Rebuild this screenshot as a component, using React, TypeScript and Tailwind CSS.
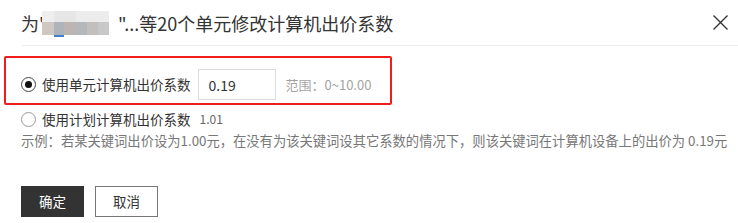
import React, { useState } from 'react';

const font = { fontFamily: '"Noto Sans CJK SC", "Noto Sans", sans-serif' };

const Radio: React.FC<{ checked: boolean }> = ({ checked }) => (
  <span
    className={`w-[15px] h-[15px] rounded-full border flex items-center justify-center shrink-0 bg-white ${
      checked ? 'border-[#444]' : 'border-[#999]'
    }`}
  >
    {checked && <span className="w-[7px] h-[7px] rounded-full bg-[#111]" />}
  </span>
);

export default function App() {
  const [mode, setMode] = useState<'unit' | 'plan'>('unit');
  const [value, setValue] = useState('0.19');

  return (
    <div className="w-[738px] h-[223px] bg-white overflow-hidden text-[#333]" style={font}>
      {/* Header */}
      <div className="h-[45px] flex items-center justify-between pl-[21px] pr-[6px]">
        <h2 className="flex items-center text-[18px] leading-none text-[#333]">
          <span>为'</span>
          {/* masked name */}
          <span className="flex flex-col w-[67px] h-[24px] -ml-[2px] relative">
            <span className="flex h-[11px]">
              <span className="w-[12px] bg-[#eeeeee]" />
              <span className="w-[22px] bg-[#e6e6e6]" />
              <span className="w-[33px] bg-[#ececec]" />
            </span>
            <span className="flex h-[13px]">
              <span className="w-[12px] bg-[#cfc8c2]" />
              <span className="w-[10px] bg-[#aeb4bb]" />
              <span className="w-[12px] bg-[#bdb5b1]" />
              <span className="w-[11px] bg-[#b5b8bb]" />
              <span className="w-[11px] bg-[#c3bfbc]" />
              <span className="w-[11px] bg-[#c8c8c8]" />
            </span>
            <span className="absolute left-[12px] top-[24px] w-[10px] h-[2px] bg-[#3f7fd0]" />
          </span>
          <span className="ml-[9px]">"...等20个单元修改计算机出价系数</span>
        </h2>
        <button type="button" className="w-[24px] h-[24px] flex items-center justify-center text-[#333]">
          <svg width="17" height="17" viewBox="0 0 17 17" fill="none" stroke="currentColor" strokeWidth="1.4">
            <path d="M1.5 1.5 L15.5 15.5 M15.5 1.5 L1.5 15.5" />
          </svg>
        </button>
      </div>

      <div className="ml-[22px] h-px bg-[#ececec]" />

      {/* Body */}
      <div className="px-[21px]">
        <div className="-ml-[17px] w-[388px] mt-[10px] border-2 border-[#f01d1d] rounded-[2px] pl-[15px] pt-[11px] pb-[3px]">
          <label className="flex items-center h-[31px] cursor-pointer" onClick={() => setMode('unit')}>
            <Radio checked={mode === 'unit'} />
            <span className="ml-[6px] text-[13.5px] text-[#333]">使用单元计算机出价系数</span>
            <input
              value={value}
              onChange={(e) => setValue(e.target.value)}
              className="ml-[7px] w-[78px] h-[31px] border border-[#dcdcdc] pl-[10px] text-[14px] text-[#333] outline-none"
              style={font}
            />
            <span className="ml-[10px] text-[13px] text-[#a3a3a3]">范围：0~10.00</span>
          </label>
        </div>

        <label className="flex items-center h-[20px] mt-[4px] cursor-pointer" onClick={() => setMode('plan')}>
          <Radio checked={mode === 'plan'} />
          <span className="ml-[6px] text-[13.5px] text-[#333]">使用计划计算机出价系数</span>
          <span className="ml-[9px] text-[12px] text-[#666]">1.01</span>
        </label>

        <p className="h-[20px] mt-[2px] flex items-center text-[13.3px] text-[#777] whitespace-nowrap">
          示例：若某关键词出价设为1.00元，在没有为该关键词设其它系数的情况下，则该关键词在计算机设备上的出价为 0.19元
        </p>

        <div className="flex gap-[11px] mt-[35px]">
          <button type="button" className="w-[63px] h-[31px] bg-[#333] text-white text-[13.5px]">
            确定
          </button>
          <button type="button" className="w-[63px] h-[31px] bg-white border border-[#777] text-[#333] text-[13.5px]">
            取消
          </button>
        </div>
      </div>
    </div>
  );
}
